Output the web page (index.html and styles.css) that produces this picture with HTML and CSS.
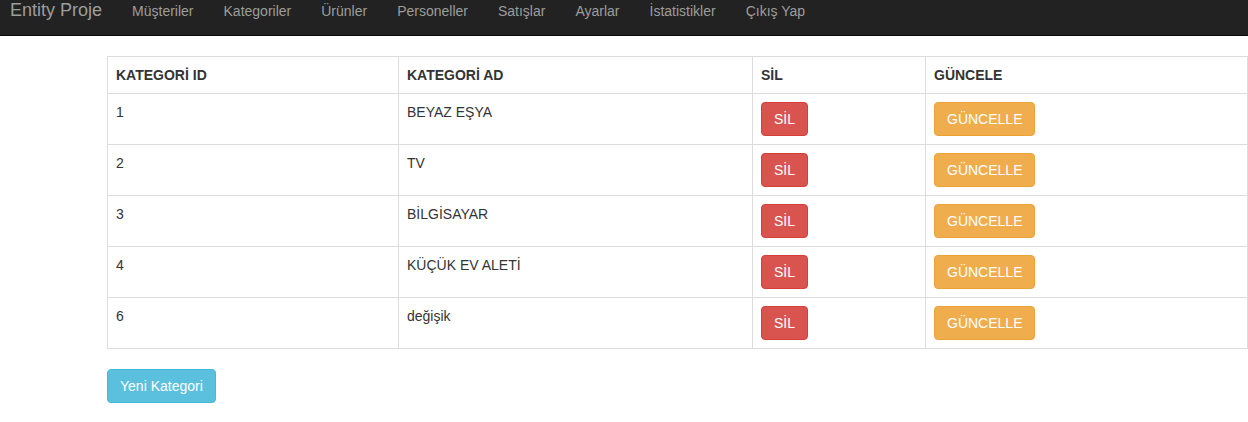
FILE: index.html
```html
<!DOCTYPE html>
<html lang="tr">
<head>
<meta charset="utf-8">
<title>Kategoriler</title>
<link rel="stylesheet" href="styles.css">
</head>
<body>
<nav class="navbar">
  <a class="brand" href="#">Entity Proje</a>
  <ul class="nav-links">
    <li><a href="#">Müşteriler</a></li>
    <li><a href="#">Kategoriler</a></li>
    <li><a href="#">Ürünler</a></li>
    <li><a href="#">Personeller</a></li>
    <li><a href="#">Satışlar</a></li>
    <li><a href="#">Ayarlar</a></li>
    <li><a href="#">İstatistikler</a></li>
    <li><a href="#">Çıkış Yap</a></li>
  </ul>
</nav>
<main class="content">
  <table class="table">
    <colgroup>
      <col class="c1"><col class="c2"><col class="c3"><col class="c4">
    </colgroup>
    <thead>
      <tr><th>KATEGORİ ID</th><th>KATEGORİ AD</th><th>SİL</th><th>GÜNCELE</th></tr>
    </thead>
    <tbody>
      <tr><td>1</td><td>BEYAZ EŞYA</td><td><a class="btn btn-danger" href="#">SİL</a></td><td><a class="btn btn-warning" href="#">GÜNCELLE</a></td></tr>
      <tr><td>2</td><td>TV</td><td><a class="btn btn-danger" href="#">SİL</a></td><td><a class="btn btn-warning" href="#">GÜNCELLE</a></td></tr>
      <tr><td>3</td><td>BİLGİSAYAR</td><td><a class="btn btn-danger" href="#">SİL</a></td><td><a class="btn btn-warning" href="#">GÜNCELLE</a></td></tr>
      <tr><td>4</td><td>KÜÇÜK EV ALETİ</td><td><a class="btn btn-danger" href="#">SİL</a></td><td><a class="btn btn-warning" href="#">GÜNCELLE</a></td></tr>
      <tr><td>6</td><td>değişik</td><td><a class="btn btn-danger" href="#">SİL</a></td><td><a class="btn btn-warning" href="#">GÜNCELLE</a></td></tr>
    </tbody>
  </table>
  <a class="btn btn-info" href="#">Yeni Kategori</a>
</main>
</body>
</html>
```
FILE: styles.css
```css
* { box-sizing: border-box; }
html, body {
  margin: 0;
  background: #fff;
  font-family: "Liberation Sans", Arial, Helvetica, sans-serif;
  font-size: 14px;
  line-height: 20px;
  color: #333;
}
a { text-decoration: none; }

.navbar {
  display: flex;
  align-items: flex-start;
  height: 36px;
  background: #222;
  border-bottom: 1px solid #080808;
  padding-left: 10px;
}
.brand {
  color: #9d9d9d;
  font-size: 18px;
  line-height: 20px;
  padding: 0 15px 0 0;
  margin-top: 0;
}
.nav-links {
  display: flex;
  list-style: none;
  margin: 0;
  padding: 0;
}
.nav-links a {
  display: block;
  color: #9d9d9d;
  padding: 1px 15px 0;
  line-height: 20px;
}

.content {
  padding: 20px 0 0 107px;
}
.table {
  border-collapse: collapse;
  table-layout: fixed;
  width: 1140px;
  border: 1px solid #ddd;
  margin-bottom: 20px;
}
.c1 { width: 291px; }
.c2 { width: 354px; }
.c3 { width: 173px; }
.c4 { width: 322px; }
.table th,
.table td {
  border: 1px solid #ddd;
  padding: 8px;
  text-align: left;
  vertical-align: top;
  line-height: 20px;
}
.table th { font-weight: bold; }

.btn {
  display: inline-block;
  padding: 6px 12px;
  font-size: 14px;
  line-height: 20px;
  border: 1px solid transparent;
  border-radius: 4px;
  color: #fff;
  white-space: nowrap;
  vertical-align: top;
}
.btn-danger { background: #d9534f; border-color: #d43f3a; }
.btn-warning { background: #f0ad4e; border-color: #eea236; }
.btn-info { background: #5bc0de; border-color: #46b8da; }
```
